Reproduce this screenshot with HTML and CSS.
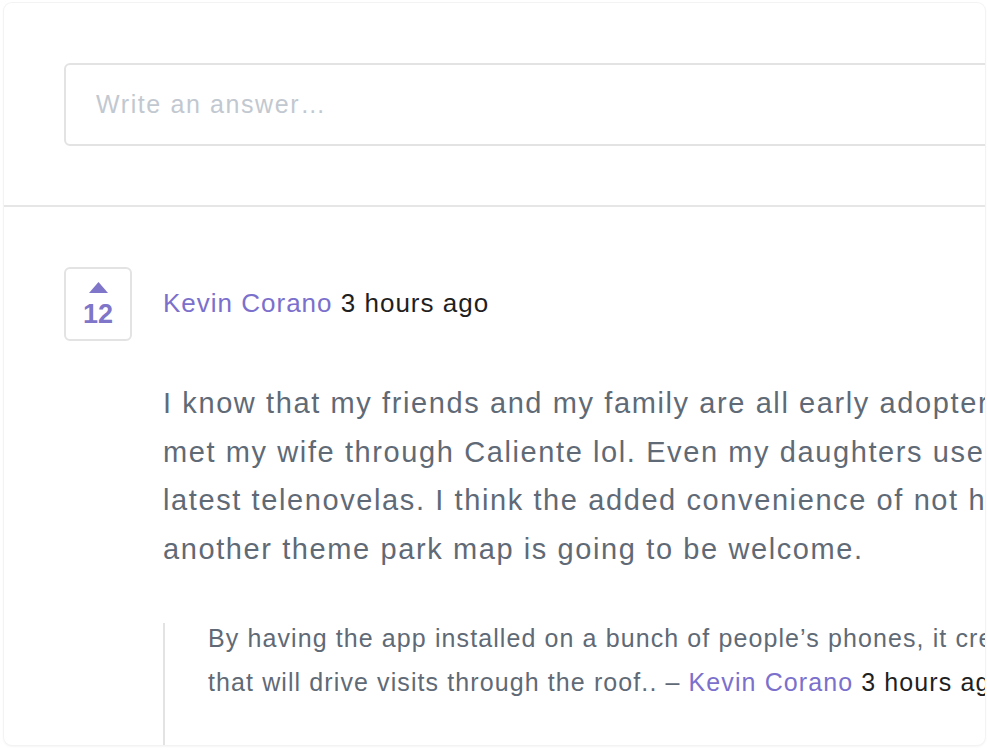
FILE: index.html
```html
<!DOCTYPE html>
<html>
<head>
<meta charset="utf-8">
<link rel="stylesheet" href="styles.css">
</head>
<body>
<div class="card">
  <div class="compose">
    <div class="input">Write an answer…</div>
  </div>
  <div class="answer">
    <div class="vote">
      <svg class="arrow" width="19" height="11" viewBox="0 0 19 11"><polygon points="9.5,0 19,11 0,11" fill="#7f75c9"/></svg>
      <span class="count">12</span>
    </div>
    <div class="content">
      <div class="meta"><a class="author">Kevin Corano</a> <span class="time">3 hours ago</span></div>
      <p class="body">I know that my friends and my family are all early adopters of this kind of tech, I actually<br>met my wife through Caliente lol. Even my daughters use it to keep up with their<br>latest telenovelas. I think the added convenience of not having to carry around<br>another theme park map is going to be welcome.</p>
      <blockquote class="quote"><p class="quote-text">By having the app installed on a bunch of people’s phones, it creates a network effect<br>that will drive visits through the roof.. – <a class="author">Kevin Corano</a> <span class="time">3 hours ago</span></p></blockquote>
    </div>
  </div>
</div>
</body>
</html>
```
FILE: styles.css
```css
html, body {
  margin: 0;
  padding: 0;
  background: #fff;
}
body {
  font-family: "Liberation Sans", Arial, sans-serif;
  padding: 3px 3px 0 4px;
  height: 750px;
  box-sizing: border-box;
  overflow: hidden;
}
.card {
  height: 742px;
  border-radius: 8px;
  box-shadow: 0 0 0 1px #f3f3f3, 0 1px 3px rgba(0,0,0,0.08);
  overflow: hidden;
  background: #fff;
}
.compose {
  padding: 60px 0 59px 60px;
  border-bottom: 2px solid #e6e6e6;
}
.input {
  width: 1100px;
  height: 79px;
  border: 2px solid #e3e3e3;
  border-radius: 6px;
  display: flex;
  align-items: center;
  padding-left: 30px;
  font-size: 25px;
  letter-spacing: 1.6px;
  color: #c2c8d0;
  white-space: nowrap;
}
.answer {
  display: flex;
  padding: 60px 0 0 60px;
  width: 1400px;
}
.vote {
  flex: none;
  width: 68px;
  height: 74px;
  border: 2px solid #e3e3e3;
  border-radius: 6px;
  display: flex;
  flex-direction: column;
  align-items: center;
  padding-top: 13px;
  box-sizing: border-box;
}
.arrow {
  display: block;
}
.count {
  font-size: 27px;
  font-weight: bold;
  color: #7f75c9;
  line-height: 30px;
  margin-top: 6px;
}
.content {
  margin-left: 31px;
}
.meta {
  height: 74px;
  line-height: 72px;
  font-size: 26px;
  letter-spacing: 1px;
  white-space: nowrap;
}
.author {
  color: #7b70cc;
}
.time {
  color: #1f1f1f;
}
.body {
  margin: 38px 0 0;
  font-size: 29px;
  letter-spacing: 1.6px;
  line-height: 48.5px;
  color: #5f6a76;
  white-space: nowrap;
}
.quote {
  display: flow-root;
  margin: 50px 0 0;
  border-left: 2px solid #e3e3e3;
  padding: 0 0 60px 43px;
}
.quote-text {
  margin: -7px 0 0;
  font-size: 25px;
  letter-spacing: 1.1px;
  line-height: 44px;
  color: #5f6a76;
  white-space: nowrap;
}
```
